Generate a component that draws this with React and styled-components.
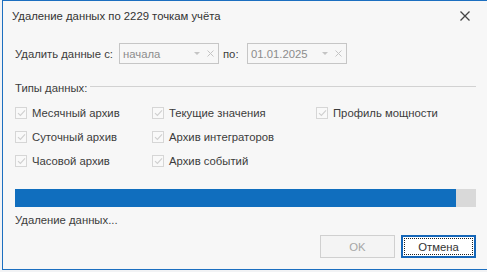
import React from "react";
import styled, { createGlobalStyle } from "styled-components";

const GlobalStyle = createGlobalStyle`
  html, body { margin: 0; padding: 0; }
  body { background: #eef0f2; font-family: "Liberation Sans", Arial, sans-serif; }
  * { box-sizing: border-box; }
`;

const Screen = styled.div`
  width: 487px;
  height: 272px;
  overflow: hidden;
  display: flex;
  padding-left: 2px;
  background: #f2f3f5;
`;

const Dialog = styled.div`
  width: 485px;
  height: 270px;
  flex: none;
  border: 1px solid #1c6fc0;
  border-right: none;
  background: #f7f7f7;
  display: flex;
  flex-direction: column;
  color: #3c3c3c;
  font-size: 11.3px;
`;

const TitleBar = styled.div`
  height: 30px;
  padding: 0 17px 0 9px;
  display: flex;
  align-items: center;
  justify-content: space-between;
  font-size: 11.3px;
  color: #333;
`;

const Close = styled.div`
  width: 10px;
  height: 10px;
  display: flex;
`;

const Body = styled.div`
  flex: 1;
  padding: 0 11px 0 12px;
  display: flex;
  flex-direction: column;
`;

const DateRow = styled.div`
  margin-top: 12px;
  height: 21px;
  display: flex;
  align-items: center;
`;

const Label = styled.span`
  width: ${(p) => p.$w}px;
  flex: none;
  white-space: nowrap;
`;

const Combo = styled.div`
  width: 100px;
  height: 21px;
  flex: none;
  border: 1px solid #c6c6c6;
  display: flex;
  align-items: center;
  padding: 0 4px 0 3px;
  color: #8c8c8c;
  margin-right: ${(p) => p.$mr || 0}px;
`;

const ComboText = styled.span`
  flex: 1;
`;

const ComboArrow = styled.span`
  width: 0;
  height: 0;
  border-left: 3px solid transparent;
  border-right: 3px solid transparent;
  border-top: 3px solid #c4c4c4;
  margin-right: 7px;
`;

const GroupHeader = styled.div`
  margin-top: 17px;
  height: 14px;
  display: flex;
  align-items: center;
  gap: 3px;
  white-space: nowrap;
`;

const GroupLine = styled.div`
  flex: 1;
  height: 1px;
  background: #d2d2d2;
  margin-top: -4px;
`;

const Grid = styled.div`
  margin-top: 6px;
  display: grid;
  grid-template-columns: 137px 164px 1fr;
  grid-auto-rows: 24px;
`;

const CheckItem = styled.div`
  display: flex;
  align-items: center;
  gap: 5px;
  white-space: nowrap;
`;

const Box = styled.span`
  width: 12px;
  height: 12px;
  flex: none;
  border: 1px solid #d6d6d6;
  background: #f9f9f9;
  display: flex;
  align-items: center;
  justify-content: center;
`;

const Progress = styled.div`
  margin-top: 16px;
  height: 18px;
  background: #d9d9d9;
  display: flex;
`;

const ProgressFill = styled.div`
  height: 100%;
  background: #106ebe;
`;

const Status = styled.div`
  margin-top: 6px;
  height: 14px;
  line-height: 14px;
`;

const Buttons = styled.div`
  margin-top: 8px;
  display: flex;
  justify-content: flex-end;
  gap: 6px;
`;

const Button = styled.div`
  width: 75px;
  height: 23px;
  display: flex;
  align-items: center;
  justify-content: center;
  border: ${(p) => (p.$focused ? "2px solid #1466b8" : "1px solid #d0d0d0")};
  background: ${(p) => (p.$focused ? "#ffffff" : "#f4f4f4")};
  color: ${(p) => (p.$focused ? "#333" : "#a6a6a6")};
  padding: 1px;
`;

const FocusRect = styled.span`
  flex: 1;
  align-self: stretch;
  display: flex;
  align-items: center;
  justify-content: center;
  outline: 1px dotted #222;
  outline-offset: -1px;
`;

const Check = () => (
  <svg width="9" height="8" viewBox="0 0 9 8">
    <path d="M1 4.2 L3.4 6.4 L8 1.4" fill="none" stroke="#cfcfcf" strokeWidth="1.1" />
  </svg>
);

const items = [
  "Месячный архив",
  "Текущие значения",
  "Профиль мощности",
  "Суточный архив",
  "Архив интеграторов",
  null,
  "Часовой архив",
  "Архив событий",
  null,
];

export default function App() {
  return (
    <>
      <GlobalStyle />
      <Screen>
        <Dialog>
          <TitleBar>
            <span>Удаление данных по 2229 точкам учёта</span>
            <Close>
              <svg width="10" height="10" viewBox="0 0 10 10">
                <path d="M0.5 0.5 L9.5 9.5 M9.5 0.5 L0.5 9.5" stroke="#444" strokeWidth="1.3" />
              </svg>
            </Close>
          </TitleBar>
          <Body>
            <DateRow>
              <Label $w={104}>Удалить данные с:</Label>
              <Combo $mr={4}>
                <ComboText>начала</ComboText>
                <ComboArrow />
                <svg width="7" height="7" viewBox="0 0 7 7">
                  <path d="M0.5 0.5 L6.5 6.5 M6.5 0.5 L0.5 6.5" stroke="#c4c4c4" strokeWidth="1" />
                </svg>
              </Combo>
              <Label $w={24}>по:</Label>
              <Combo>
                <ComboText>01.01.2025</ComboText>
                <ComboArrow />
                <svg width="7" height="7" viewBox="0 0 7 7">
                  <path d="M0.5 0.5 L6.5 6.5 M6.5 0.5 L0.5 6.5" stroke="#c4c4c4" strokeWidth="1" />
                </svg>
              </Combo>
            </DateRow>
            <GroupHeader>
              <span>Типы данных:</span>
              <GroupLine />
            </GroupHeader>
            <Grid>
              {items.map((t, i) =>
                t ? (
                  <CheckItem key={i}>
                    <Box>
                      <Check />
                    </Box>
                    <span>{t}</span>
                  </CheckItem>
                ) : (
                  <span key={i} />
                )
              )}
            </Grid>
            <Progress>
              <ProgressFill style={{ width: "95.7%" }} />
            </Progress>
            <Status>Удаление данных...</Status>
            <Buttons>
              <Button>OK</Button>
              <Button $focused>
                <FocusRect>Отмена</FocusRect>
              </Button>
            </Buttons>
          </Body>
        </Dialog>
      </Screen>
    </>
  );
}
